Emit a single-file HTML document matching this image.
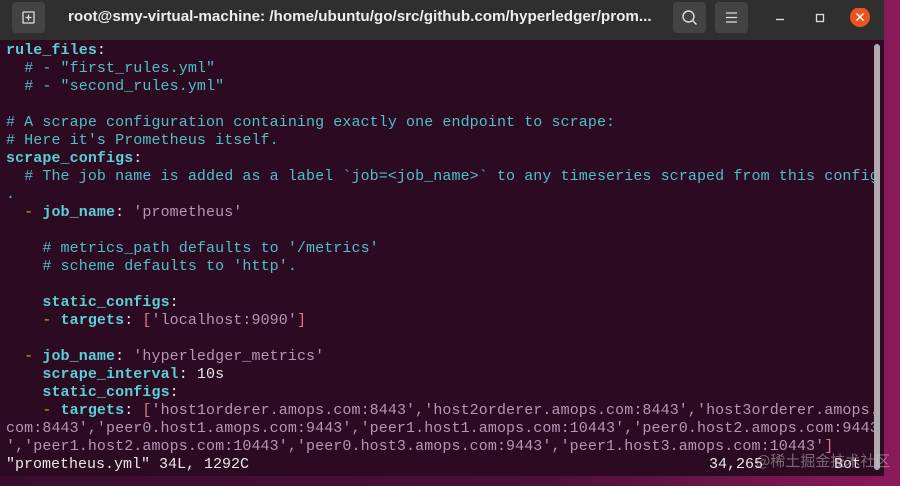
<!DOCTYPE html>
<html><head><meta charset="utf-8"><style>
html,body{margin:0;padding:0;width:900px;height:486px;overflow:hidden;background:#5a1240;}
.desk{position:absolute;left:0;top:0;width:900px;height:486px;background:linear-gradient(90deg,#3a0c2c 0%,#4a1036 60%,#8a1a5a 100%);}
.win{position:absolute;left:0;top:0;width:884px;height:476px;background:#2c0a22;}
.tb{position:absolute;left:0;top:0;width:884px;height:40px;background:#2f2f2f;}
.btn{position:absolute;top:2px;width:33px;height:31px;background:#434343;border-radius:4px;}
.title{position:absolute;left:68px;top:8px;font:bold 15.2px "Liberation Sans",sans-serif;color:#eee;white-space:nowrap;}
.term{position:absolute;left:6px;top:42px;font:15px/18px "Liberation Mono",monospace;letter-spacing:0.09px;color:#e8e8e8;white-space:pre;}
.st{position:absolute;top:456px;font:15px/18px "Liberation Mono",monospace;color:#e8e8e8;white-space:pre;}
.k{color:#5ccfd6;font-weight:bold}
.c{color:#4fc0c8}
.s{color:#b596b3}
.d{color:#d4aa10}
.b{color:#d57a86}
.sb{position:absolute;left:874px;top:44px;width:6px;height:426px;background:#b0aab0;border-radius:3px;}
.wm{position:absolute;left:756px;top:450px;font:15px "Noto Sans CJK SC",sans-serif;color:rgba(220,220,220,0.45);white-space:nowrap;}
</style></head><body>
<div class="desk"></div>
<div class="win">
<div class="tb">
 <div class="btn" style="left:12px"><svg width="33" height="31"><path d="M11 10v11h11" stroke="#ddd" fill="none" stroke-width="1.3"/><path d="M11 10h11v11" stroke="#ddd" fill="none" stroke-width="1.3"/><path d="M16.5 12.5v6M13.5 15.5h6" stroke="#ddd" stroke-width="1.3"/></svg></div>
 <div class="title">root@smy-virtual-machine: /home/ubuntu/go/src/github.com/hyperledger/prom...</div>
 <div class="btn" style="left:673px"><svg width="33" height="31"><circle cx="15.5" cy="14.5" r="5.5" stroke="#ddd" fill="none" stroke-width="1.4"/><path d="M19.5 18.5l4 4" stroke="#ddd" stroke-width="1.5"/></svg></div>
 <div class="btn" style="left:715px"><svg width="33" height="31"><path d="M11 11h11M11 15.5h11M11 20h11" stroke="#ddd" stroke-width="1.3"/></svg></div>
 <svg style="position:absolute;left:770px;top:8px" width="100" height="24"><path d="M6 11.5h8" stroke="#ddd" stroke-width="1.4"/><rect x="46.5" y="6.5" width="7" height="7" stroke="#ddd" fill="none" stroke-width="1.3"/><circle cx="90" cy="9" r="10" fill="#e95420"/><path d="M86.5 5.5l7 7M93.5 5.5l-7 7" stroke="#fff" stroke-width="1.5"/></svg>
</div>
<div class="term"><span class="k">rule_files</span>:
  <span class="c"># - "first_rules.yml"</span>
  <span class="c"># - "second_rules.yml"</span>

<span class="c"># A scrape configuration containing exactly one endpoint to scrape:</span>
<span class="c"># Here it's Prometheus itself.</span>
<span class="k">scrape_configs</span>:
  <span class="c"># The job name is added as a label `job=&lt;job_name&gt;` to any timeseries scraped from this config</span>
<span class="c">.</span>
  <span class="d">-</span> <span class="k">job_name</span>: <span class="s">'prometheus'</span>

    <span class="c"># metrics_path defaults to '/metrics'</span>
    <span class="c"># scheme defaults to 'http'.</span>

    <span class="k">static_configs</span>:
    <span class="d">-</span> <span class="k">targets</span>: <span class="b">[</span><span class="s">'localhost:9090'</span><span class="b">]</span>

  <span class="d">-</span> <span class="k">job_name</span>: <span class="s">'hyperledger_metrics'</span>
    <span class="k">scrape_interval</span>: 10s
    <span class="k">static_configs</span>:
    <span class="d">-</span> <span class="k">targets</span>: <span class="b">[</span><span class="s">'host1orderer.amops.com:8443','host2orderer.amops.com:8443','host3orderer.amops.</span>
<span class="s">com:8443','peer0.host1.amops.com:9443','peer1.host1.amops.com:10443','peer0.host2.amops.com:9443</span>
<span class="s">','peer1.host2.amops.com:10443','peer0.host3.amops.com:9443','peer1.host3.amops.com:10443'</span><span class="b">]</span></div>
<div class="st" style="left:6px">"prometheus.yml" 34L, 1292C</div>
<div class="st" style="left:709px">34,265</div>
<div class="st" style="left:834px">Bot</div>
<div class="sb"></div>
</div>
<div class="wm">@稀土掘金技术社区</div>
</body></html>
